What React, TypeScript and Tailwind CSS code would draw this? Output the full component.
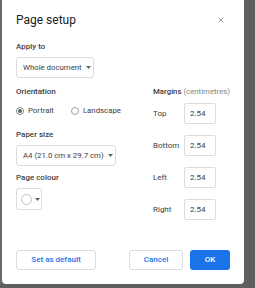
import { X } from 'lucide-react';

function Caret() {
  return (
    <svg width="5" height="3" viewBox="0 0 5 3" className="shrink-0">
      <path d="M0 0h5L2.5 3z" fill="#5f6368" />
    </svg>
  );
}

function Label({ children }: { children: React.ReactNode }) {
  return (
    <div className="h-[12px] leading-[12px] text-[8px] font-medium text-[#3c4043] whitespace-nowrap">
      {children}
    </div>
  );
}

function MarginRow({ label }: { label: string }) {
  return (
    <div className="flex items-center h-[21px]">
      <span className="w-[31px] text-[8px] text-[#3c4043]">{label}</span>
      <div className="w-[32px] h-[21px] border border-[#dadce0] rounded-[2px] flex items-center pl-[5px] text-[8px] text-[#3c4043]">
        2.54
      </div>
    </div>
  );
}

export default function App() {
  return (
    <div className="w-[255px] h-[288px] bg-[#5f5f5f] flex items-start font-['Roboto',sans-serif] whitespace-nowrap">
      <div className="w-[2px] h-[284px] bg-[#6b6b6b]" />
      <div className="w-[242px] h-[284px] bg-white rounded-b-[4px] px-[14px] flex flex-col">
        {/* Title */}
        <div className="mt-[12px] h-[16px] flex items-center justify-between">
          <span className="text-[12px] text-[#202124] leading-[16px]">Page setup</span>
          <X className="w-[8px] h-[8px] mr-[5px] text-[#5f6368]" strokeWidth={2} />
        </div>

        {/* Apply to */}
        <div className="mt-[13px]">
          <Label>Apply to</Label>
        </div>
        <div className="mt-[4px] w-[78px] h-[21px] border border-[#dadce0] rounded-[3px] flex items-center gap-[4px] pl-[6px] text-[7.8px] text-[#3c4043]">
          Whole document <Caret />
        </div>

        {/* Columns */}
        <div className="mt-[8px] flex">
          <div className="w-[137px] shrink-0 flex flex-col">
            <Label>Orientation</Label>
            <div className="mt-[7px] h-[12px] flex items-center text-[7.8px] text-[#3c4043]">
              <span className="w-[8px] h-[8px] rounded-full border border-[#80868b] flex items-center justify-center">
                <span className="w-[4px] h-[4px] rounded-full bg-[#5f6368]" />
              </span>
              <span className="ml-[4px]">Portrait</span>
              <span className="ml-[17px] w-[8px] h-[8px] rounded-full border border-[#9aa0a6]" />
              <span className="ml-[4px]">Landscape</span>
            </div>
            <div className="mt-[12px]">
              <Label>Paper size</Label>
            </div>
            <div className="mt-[4px] w-[100px] h-[21px] border border-[#dadce0] rounded-[3px] flex items-center gap-[4px] pl-[6px] text-[7.8px] text-[#3c4043]">
              A4 (21.0 cm x 29.7 cm) <Caret />
            </div>
            <div className="mt-[6px]">
              <Label>Page colour</Label>
            </div>
            <div className="mt-[4px] w-[26px] h-[22px] border border-[#dadce0] rounded-[3px] flex items-center pl-[4px] gap-[3px]">
              <span className="w-[11px] h-[11px] rounded-full border border-[#bdc1c6]" />
              <Caret />
            </div>
          </div>

          <div className="flex flex-col">
            <div className="h-[12px] leading-[12px] text-[7.8px]">
              <span className="font-medium text-[#3c4043]">Margins</span>
              <span className="text-[#80868b]"> (centimetres)</span>
            </div>
            <div className="mt-[5px] flex flex-col gap-[11px]">
              <MarginRow label="Top" />
              <MarginRow label="Bottom" />
              <MarginRow label="Left" />
              <MarginRow label="Right" />
            </div>
          </div>
        </div>

        {/* Buttons */}
        <div className="mt-auto mb-[14px] flex items-center">
          <button className="w-[80px] h-[20px] border border-[#dadce0] rounded-[3px] text-[8px] font-medium text-[#1a73e8]">
            Set as default
          </button>
          <button className="ml-auto w-[54px] h-[20px] border border-[#dadce0] rounded-[3px] text-[8px] font-medium text-[#1a73e8]">
            Cancel
          </button>
          <button className="ml-[7px] w-[40px] h-[20px] rounded-[3px] bg-[#1a73e8] text-[8px] font-medium text-white">
            OK
          </button>
        </div>
      </div>
    </div>
  );
}
